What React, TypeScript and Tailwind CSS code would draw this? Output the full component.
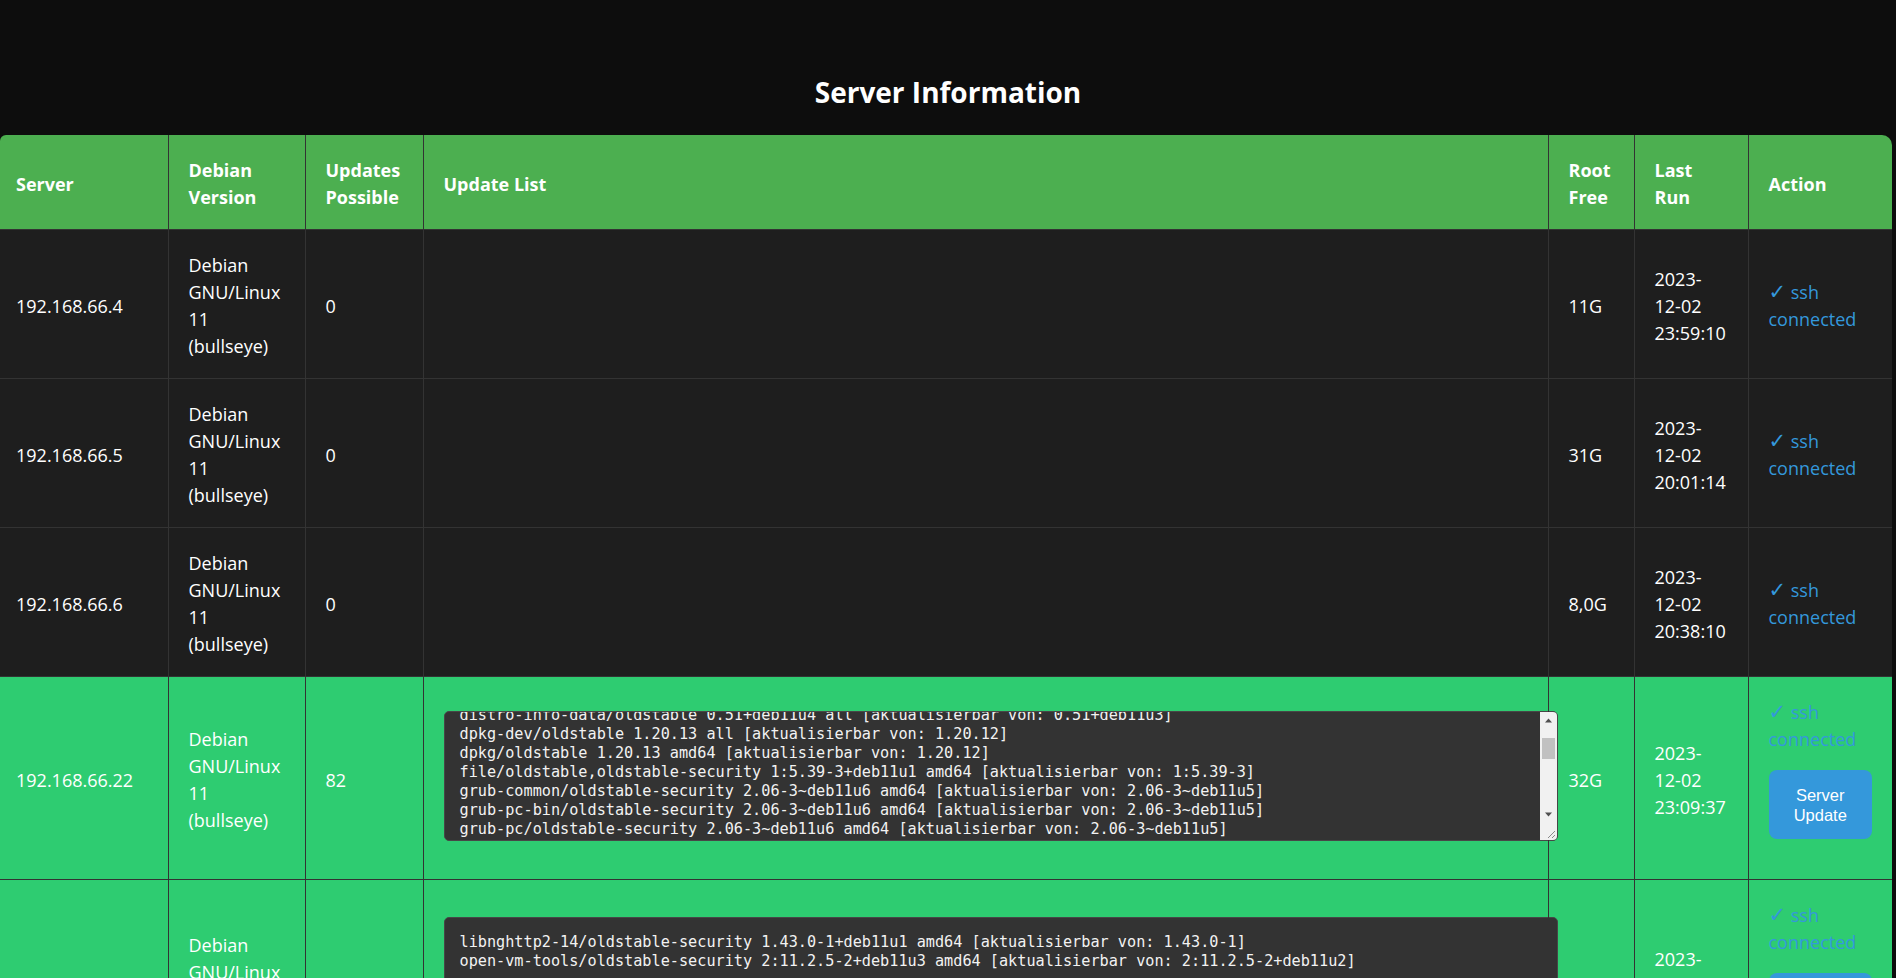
import React from "react";

type Row = {
  ip: string;
  updates: string;
  root: string;
  run: string[];
  highlight: boolean;
  list?: string[];
  scroll?: number;
  scrollbar?: boolean;
  extra?: boolean;
};

const list22 = [
  "base-files/oldstable 11.1+deb11u8 amd64 [aktualisierbar von: 11.1+deb11u7]",
  "bind9-dnsutils/oldstable-security 1:9.16.44-1~deb11u1 amd64 [aktualisierbar von: 1:9.16.42-1~deb11u1]",
  "bind9-host/oldstable-security 1:9.16.44-1~deb11u1 amd64 [aktualisierbar von: 1:9.16.42-1~deb11u1]",
  "bind9-libs/oldstable-security 1:9.16.44-1~deb11u1 amd64 [aktualisierbar von: 1:9.16.42-1~deb11u1]",
  "bsdextrautils/oldstable 2.36.1-8+deb11u1 amd64 [aktualisierbar von: 2.36.1-8]",
  "bsdutils/oldstable 1:2.36.1-8+deb11u1 amd64 [aktualisierbar von: 1:2.36.1-8]",
  "cpio/oldstable 2.13+dfsg-7.1~deb11u1 amd64 [aktualisierbar von: 2.13+dfsg-4]",
  "curl/oldstable-security 7.74.0-1.3+deb11u10 amd64 [aktualisierbar von: 7.74.0-1.3+deb11u7]",
  "dbus/oldstable 1.12.28-0+deb11u1 amd64 [aktualisierbar von: 1.12.24-0+deb11u1]",
  "dbus-user-session/oldstable 1.12.28-0+deb11u1 amd64 [aktualisierbar von: 1.12.24-0+deb11u1]",
  "debian-archive-keyring/oldstable 2021.1.1+deb11u1 all [aktualisierbar von: 2021.1.1]",
  "dirmngr/oldstable 2.2.27-2+deb11u2 amd64 [aktualisierbar von: 2.2.27-2+deb11u1]",
  "distro-info/oldstable 1.0+deb11u1 amd64 [aktualisierbar von: 1.0]",
  "distro-info-data/oldstable 0.51+deb11u4 all [aktualisierbar von: 0.51+deb11u3]",
  "dpkg-dev/oldstable 1.20.13 all [aktualisierbar von: 1.20.12]",
  "dpkg/oldstable 1.20.13 amd64 [aktualisierbar von: 1.20.12]",
  "file/oldstable,oldstable-security 1:5.39-3+deb11u1 amd64 [aktualisierbar von: 1:5.39-3]",
  "grub-common/oldstable-security 2.06-3~deb11u6 amd64 [aktualisierbar von: 2.06-3~deb11u5]",
  "grub-pc-bin/oldstable-security 2.06-3~deb11u6 amd64 [aktualisierbar von: 2.06-3~deb11u5]",
  "grub-pc/oldstable-security 2.06-3~deb11u6 amd64 [aktualisierbar von: 2.06-3~deb11u5]",
  "grub2-common/oldstable-security 2.06-3~deb11u6 amd64 [aktualisierbar von: 2.06-3~deb11u5]",
  "libc-bin/oldstable 2.31-13+deb11u7 amd64 [aktualisierbar von: 2.31-13+deb11u6]",
  "libc-l10n/oldstable 2.31-13+deb11u7 all [aktualisierbar von: 2.31-13+deb11u6]",
  "libc6/oldstable 2.31-13+deb11u7 amd64 [aktualisierbar von: 2.31-13+deb11u6]",
  "libcurl3-gnutls/oldstable-security 7.74.0-1.3+deb11u10 amd64 [aktualisierbar von: 7.74.0-1.3+deb11u7]",
  "libcurl4/oldstable-security 7.74.0-1.3+deb11u10 amd64 [aktualisierbar von: 7.74.0-1.3+deb11u7]",
  "libdbus-1-3/oldstable 1.12.28-0+deb11u1 amd64 [aktualisierbar von: 1.12.24-0+deb11u1]",
  "libdpkg-perl/oldstable 1.20.13 all [aktualisierbar von: 1.20.12]",
  "libgnutls30/oldstable-security 3.7.1-5+deb11u4 amd64 [aktualisierbar von: 3.7.1-5+deb11u3]",
];

const list23 = [
  "libnghttp2-14/oldstable-security 1.43.0-1+deb11u1 amd64 [aktualisierbar von: 1.43.0-1]",
  "open-vm-tools/oldstable-security 2:11.2.5-2+deb11u3 amd64 [aktualisierbar von: 2:11.2.5-2+deb11u2]",
];

const rows: Row[] = [
  { ip: "192.168.66.4", updates: "0", root: "11G", run: ["2023-", "12-02", "23:59:10"], highlight: false },
  { ip: "192.168.66.5", updates: "0", root: "31G", run: ["2023-", "12-02", "20:01:14"], highlight: false },
  { ip: "192.168.66.6", updates: "0", root: "8,0G", run: ["2023-", "12-02", "20:38:10"], highlight: false },
  {
    ip: "192.168.66.22",
    updates: "82",
    root: "32G",
    run: ["2023-", "12-02", "23:09:37"],
    highlight: true,
    list: list22,
    scroll: 268,
    scrollbar: true,
  },
  {
    ip: "192.168.66.23",
    updates: "2",
    root: "24G",
    run: ["2023-", "12-02", "22:47:05"],
    highlight: true,
    list: list23,
    extra: true,
  },
];

function Lines({ items }: { items: string[] }) {
  return (
    <>
      {items.map((t, i) => (
        <span key={i} className="block">
          {t}
        </span>
      ))}
    </>
  );
}

function Scrollbar() {
  return (
    <div className="flex w-[17px] shrink-0 flex-col bg-[#f1f1f1]">
      <div className="flex h-[17px] items-center justify-center">
        <svg width="17" height="17" viewBox="0 0 17 17">
          <polygon points="5,10.5 8.5,6.5 12,10.5" fill="#505050" />
        </svg>
      </div>
      <div className="flex-1 px-[2px] pt-[9px]">
        <div className="h-[21px] bg-[#c1c1c1]" />
      </div>
      <div className="flex h-[17px] items-center justify-center">
        <svg width="17" height="17" viewBox="0 0 17 17">
          <polygon points="5,6.5 8.5,10.5 12,6.5" fill="#505050" />
        </svg>
      </div>
      <div className="h-[17px]">
        <svg width="17" height="17" viewBox="0 0 17 17">
          <line x1="15" y1="8" x2="8" y2="15" stroke="#8a8a8a" strokeWidth="1" />
          <line x1="15" y1="12" x2="12" y2="15" stroke="#8a8a8a" strokeWidth="1" />
        </svg>
      </div>
    </div>
  );
}

function UpdateBox({ lines, scroll, scrollbar }: { lines: string[]; scroll?: number; scrollbar?: boolean }) {
  return (
    <div className="pb-[4px]">
      <div className="flex h-[130px] w-[1114px] overflow-hidden rounded-[5px] border border-[#474747] bg-[#333333]">
        <div
          className="flex-1 overflow-hidden px-[15px] py-[15px] font-['DejaVu_Sans_Mono',monospace] text-[15.2px] leading-[19px] whitespace-pre text-[#f2f2f2]"
          ref={(el) => {
            if (el && scroll) el.scrollTop = scroll;
          }}
        >
          {lines.map((l, i) => (
            <div key={i}>{l}</div>
          ))}
        </div>
        {scrollbar ? <Scrollbar /> : null}
      </div>
    </div>
  );
}

export default function App() {
  const th = "border-l border-[#333333] px-5 pt-[22px] pb-[18px] text-left align-middle font-bold";
  const td = "border-l border-[#333333] px-5 pt-[22px] pb-[18px] align-middle";
  const tdList = "border-l border-[#333333] px-5 py-5 align-middle";
  return (
    <div className="min-h-screen bg-[#0d0d0d] font-['Open_Sans',sans-serif] text-white">
      <h1 className="pt-[75px] pb-[26px] text-center text-[28px] leading-[34px] font-bold">
        Server Information
      </h1>
      <div className="w-[1892px] overflow-hidden rounded-tl-[6px] rounded-tr-[10px]">
        <table className="w-full table-fixed border-collapse text-[18px] leading-[27px]">
          <colgroup>
            <col className="w-[168px]" />
            <col className="w-[137px]" />
            <col className="w-[118px]" />
            <col />
            <col className="w-[86px]" />
            <col className="w-[114px]" />
            <col className="w-[144px]" />
          </colgroup>
          <thead>
            <tr className="border-b border-[#333333] bg-[#4caf50]">
              <th className="pt-[22px] pr-5 pb-[18px] pl-4 text-left align-middle font-bold">Server</th>
              <th className={th}>
                <Lines items={["Debian", "Version"]} />
              </th>
              <th className={th}>
                <Lines items={["Updates", "Possible"]} />
              </th>
              <th className={th}>Update List</th>
              <th className={th}>
                <Lines items={["Root", "Free"]} />
              </th>
              <th className={th}>
                <Lines items={["Last", "Run"]} />
              </th>
              <th className={th}>Action</th>
            </tr>
          </thead>
          <tbody>
            {rows.map((r) => (
              <tr
                key={r.ip}
                className={`border-b border-[#333333] ${r.highlight ? "bg-[#2ecc71]" : "bg-[#1e1e1e]"}`}
              >
                <td className="pt-[22px] pr-5 pb-[18px] pl-4 align-middle">{r.ip}</td>
                <td className={td}>
                  <Lines items={["Debian", "GNU/Linux", "11", "(bullseye)"]} />
                </td>
                <td className={td}>{r.updates}</td>
                <td className={tdList}>
                  {r.list ? <UpdateBox lines={r.list} scroll={r.scroll} scrollbar={r.scrollbar} /> : null}
                </td>
                <td className={td}>{r.root}</td>
                <td className={td}>
                  <Lines items={r.run} />
                </td>
                <td className={td}>
                  <div className="text-[#3498db]">
                    <span className="block">
                      <span className="font-['DejaVu_Sans',sans-serif] text-[21px]">✓</span> ssh
                    </span>
                    <span className="block">connected</span>
                  </div>
                  {r.highlight ? (
                    <div className={r.extra ? "pt-[17px] pb-[28px]" : "pt-[17px] pb-[22px]"}>
                      <button className="block w-full rounded-[8px] bg-[#3498db] px-[10px] py-[14.5px] font-['Liberation_Sans',Arial,sans-serif] text-[16.5px] leading-[20px] text-white">
                        Server Update
                      </button>
                    </div>
                  ) : null}
                </td>
              </tr>
            ))}
          </tbody>
        </table>
      </div>
    </div>
  );
}
